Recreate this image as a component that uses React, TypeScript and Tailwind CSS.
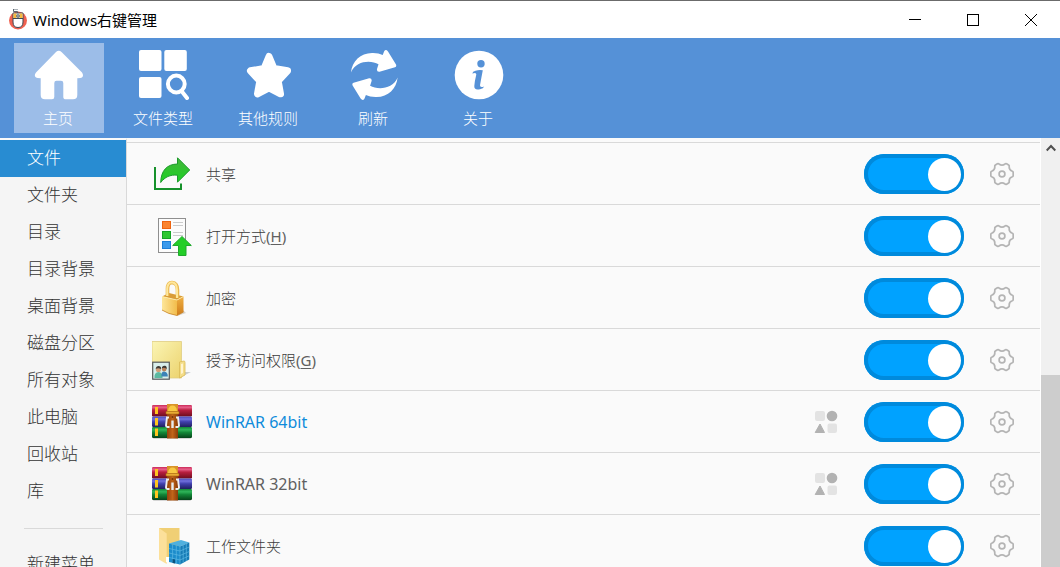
import React, { useState } from 'react';

const HomeIcon = () => (
  <svg viewBox="0 0 50 50" className="size-[50px]" fill="currentColor">
    <path d="M22 2 Q24.700 -.4 27.500 2 L48 22.500 Q50 25.500 48 27.500 Q47 28.200 43.300 28.200 V45 Q43.300 49.300 39 49.300 H32 Q29.300 49.300 29.300 47 V33 Q29.300 30.700 27 30.700 H22.500 Q20.300 30.700 20.300 33 V47 Q20.300 49.300 18 49.300 H11 Q6.700 49.300 6.700 45 V28.200 Q3 28.200 2 27.500 Q-.4 25.500 2 22.500 Z" />
  </svg>
);

const FileTypeIcon = () => (
  <svg viewBox="0 0 50 50" className="size-[50px]" fill="currentColor">
    <rect x="0" y="0" width="22.500" height="21" rx="2" />
    <rect x="25.300" y="0" width="22.500" height="21" rx="2" />
    <rect x="0" y="27" width="22.500" height="21" rx="2" />
    <circle cx="37.300" cy="34" r="8.400" fill="none" stroke="currentColor" strokeWidth="4" />
    <path d="M42.500 41 L48 48" stroke="currentColor" strokeWidth="4" strokeLinecap="round" />
  </svg>
);

const StarIcon = () => (
  <svg viewBox="0 0 50 50" className="size-[50px]" fill="currentColor" stroke="currentColor" strokeWidth="7" strokeLinejoin="round">
    <path d="M25 6.500 L30 18.500 L43.500 20.800 L34.200 31 L36.500 43.800 L25 37.800 L13.500 43.800 L15.800 31 L6.500 20.800 L20 18.500 Z" />
  </svg>
);

const RefreshIcon = () => {
  const arrow =
    'M2 22.500 C3 11 12 2.500 24 3 C28 3 31 3.700 33.700 5 L35.300 1 Q37 -1 39 1.500 L47 14.500 Q47.800 16.600 46 17.200 L30.500 21.700 Q27.500 22 28 19 L29.500 14.300 C22 10 7 10.500 2 22.500 Z';
  return (
    <svg viewBox="0 0 50 50" className="size-[50px]" fill="currentColor">
      <path d={arrow} />
      <path d={arrow} transform="rotate(180 25.3 25)" />
    </svg>
  );
};

const InfoIcon = () => (
  <svg viewBox="0 0 50 50" className="size-[50px]">
    <circle cx="25" cy="25" r="24.300" fill="currentColor" />
    <circle cx="27" cy="13.700" r="3.700" fill="#5591d7" />
    <path
      d="M18.300 23.500 Q18.500 21.300 21.500 20.700 Q25.500 19.300 28.800 20.300 Q27.500 27 26 35.300 Q25.800 38 30.200 36.500 Q29.500 38.500 26 39.200 Q20 40.500 20.300 36 Q20.700 31 22.300 24.500 Q22.500 22 18.300 23.500 Z"
      fill="#5591d7"
    />
  </svg>
);

const AppIcon = () => (
  <svg viewBox="0 0 20 22" className="h-[22px] w-5">
    <circle cx="10" cy="11.500" r="9" fill="#f0614f" />
    <path d="M9.500 4 V2.500 H5.500 V0 H10" fill="none" stroke="#5b6670" strokeWidth="1" />
    <path d="M5 4 H15 V13 Q15 18.500 10 18.500 Q5 18.500 5 13 Z" fill="#fff" stroke="#3d4954" strokeWidth="1" />
    <path d="M5.500 4.500 H8.500 V9 H5.500 Z M11.500 4.500 H14.500 V9 H11.500 Z" fill="#f7b93e" />
    <path d="M5 9.500 H15" stroke="#3d4954" strokeWidth="1" />
    <circle cx="10" cy="7" r="1.600" fill="#8d99a3" stroke="#3d4954" strokeWidth=".5" />
  </svg>
);

const ShareIcon = () => (
  <svg viewBox="0 0 40 40" className="size-10">
    <defs>
      <linearGradient id="share" x1="0" y1="0" x2="0" y2="1">
        <stop offset="0" stopColor="#45b43c" />
        <stop offset="1" stopColor="#1bd322" />
      </linearGradient>
    </defs>
    <path d="M3 13 V35 H29 V29.500" fill="none" stroke="#16912b" strokeWidth="2" />
    <path
      d="M25.500 3.800 L37.700 16 L25.500 28.200 V21.200 C18 20.500 13 23 8.700 28.500 C9 16.500 15 10.200 25.500 10 Z"
      fill="url(#share)"
      stroke="#1c9a2b"
      strokeWidth="1"
    />
  </svg>
);

const OpenWithIcon = () => (
  <svg viewBox="0 0 40 40" className="size-10">
    <rect x="6.500" y="2.500" width="27" height="34" fill="#fcfcfc" stroke="#8f8f8f" />
    <rect x="10.500" y="5.500" width="8" height="7" fill="#fb842f" stroke="#ed6410" />
    <rect x="10.500" y="15.500" width="8" height="7" fill="#2fc832" stroke="#16a426" />
    <rect x="10.500" y="25.500" width="8" height="7" fill="#3b9aec" stroke="#1d7fd7" />
    <path d="M21 6.500 H31 M21 9.500 H31 M21 16.500 H31 M21 19.500 H31" stroke="#ccc" />
    <path d="M30 20.500 L39.300 29.500 H34 V39.500 H26.500 V29.500 H20.700 Z" fill="#23ce27" stroke="#1fa82c" />
  </svg>
);

const LockIcon = () => (
  <svg viewBox="0 0 40 40" className="size-10">
    <defs>
      <linearGradient id="lockLeft" x1="0" y1="0" x2="1" y2="0">
        <stop offset="0" stopColor="#fde69a" />
        <stop offset="1" stopColor="#f2bc4b" />
      </linearGradient>
      <linearGradient id="lockRight" x1="0" y1="0" x2="0" y2="1">
        <stop offset="0" stopColor="#efb042" />
        <stop offset="1" stopColor="#cf7c1a" />
      </linearGradient>
    </defs>
    <path d="M25 38 L34 35 L31 32 Z" fill="#d9d4cb" />
    <path d="M10 18.500 L17 15 L31.500 18.500 L25 22 Z" fill="#d99c37" />
    <path d="M15.500 18 V11 Q15.500 4.500 20 4.500 Q25.500 5 25.500 12 V20" fill="none" stroke="#e8b64d" strokeWidth="3.600" />
    <path d="M15.200 18 V11 Q15.500 4.300 20 4.300 Q25 5 25 12 V20" fill="none" stroke="#ffe79b" strokeWidth="2" />
    <path d="M10 18.500 L25 22 V37.500 Q16 36 10 32 Z" fill="url(#lockLeft)" />
    <path d="M25 22 L31.500 18.500 V34 L25 37.500 Z" fill="url(#lockRight)" />
    <path d="M10 18.500 L25 22 L31.500 18.500" fill="none" stroke="#fff0b4" strokeWidth=".8" />
    <path d="M10 32 Q16 36 25 37.500 L31.500 34" fill="none" stroke="#c68125" strokeWidth=".8" />
  </svg>
);

const AccessIcon = () => (
  <svg viewBox="0 0 40 40" className="size-10">
    <defs>
      <linearGradient id="folder" x1="0" y1="0" x2="1" y2="1">
        <stop offset="0" stopColor="#fbf5b5" />
        <stop offset="1" stopColor="#ecd36e" />
      </linearGradient>
    </defs>
    <path d="M29 37 L39 32 L33 32 Z" fill="#c9ced0" />
    <path d="M0 1.500 H29.500 V38 H0 Z" fill="url(#folder)" stroke="#e0cd82" strokeWidth=".8" />
    <path d="M27.500 22 L32 21 Q33 21 33 22.500 V35 L27.500 38 Z" fill="#f4dd8a" stroke="#dbbb55" strokeWidth=".8" />
    <path d="M29 24 L31 23.500 V33 L29 34 Z" fill="#fff4cf" />
    <rect x=".7" y="22.200" width="16.600" height="17" fill="#d9efeb" stroke="#55595a" strokeWidth="1.200" />
    <path d="M2.500 38 Q2 32.500 6.500 32 Q11 32.500 10.500 38 Z" fill="#5cb9a0" />
    <path d="M9.500 36.500 Q9 31.500 12 31.500 Q16 32 15.800 36.500 Z" fill="#3c83b8" />
    <circle cx="6.400" cy="29.500" r="2.600" fill="#d2a07a" />
    <circle cx="12.200" cy="29" r="2.400" fill="#b98259" />
    <path d="M3.700 29 Q4 25.800 7 26 Q9.500 26.500 9 29 Q6 27.500 3.700 29 Z M9.800 28.500 Q10 25.300 13 25.700 Q15 26 14.700 29 Q12 27 9.800 28.500 Z" fill="#3f3a34" />
  </svg>
);

const WinRarIcon = () => (
  <svg viewBox="0 0 40 40" className="size-10">
    <defs>
      <linearGradient id="bookRed" x1="0" y1="0" x2="0" y2="1">
        <stop offset="0" stopColor="#c92a58" />
        <stop offset=".2" stopColor="#e8608a" />
        <stop offset=".45" stopColor="#b81f3f" />
        <stop offset="1" stopColor="#6d0d1d" />
      </linearGradient>
      <linearGradient id="bookBlue" x1="0" y1="0" x2="0" y2="1">
        <stop offset="0" stopColor="#4b49b8" />
        <stop offset=".25" stopColor="#7070dc" />
        <stop offset=".5" stopColor="#4040ad" />
        <stop offset="1" stopColor="#20205e" />
      </linearGradient>
      <linearGradient id="bookGreen" x1="0" y1="0" x2="0" y2="1">
        <stop offset="0" stopColor="#118535" />
        <stop offset=".25" stopColor="#2fb459" />
        <stop offset=".5" stopColor="#128637" />
        <stop offset="1" stopColor="#06421a" />
      </linearGradient>
      <linearGradient id="belt" x1="0" y1="0" x2="1" y2="0">
        <stop offset="0" stopColor="#94420b" />
        <stop offset=".5" stopColor="#c0641a" />
        <stop offset="1" stopColor="#8a3c07" />
      </linearGradient>
    </defs>
    <rect x="1" y="34" width="38" height="3" rx="1" fill="#d5d5d5" />
    <rect x="0" y="3" width="40" height="11.500" rx="1.200" fill="url(#bookRed)" />
    <rect x="0" y="14.500" width="40" height="10.500" rx="1.200" fill="url(#bookBlue)" />
    <rect x="0" y="25" width="40" height="11" rx="1.200" fill="url(#bookGreen)" />
    <path d="M3 5 H6 V12 H3 Z M3 16 H6 V23.500 H3 Z M3 26.500 H6 V34 H3 Z" fill="#ffc51f" />
    <path d="M15 2 H26 V36.500 H15 Z" fill="url(#belt)" />
    <path d="M15 2 H26 V12 H15 Z" fill="#d9942a" />
    <path d="M16 9 Q16.500 3.500 20.500 3.500 Q24.500 3.500 25 9 Z" fill="#f9c943" />
    <path d="M14 9.500 H27 V12 H14 Z" fill="#e9ab35" stroke="#a8690f" strokeWidth=".6" />
    <path d="M17 15.500 H15 L14 23.500 Q14 25 15.500 25 H17.500 M23.500 25 H25.500 Q27 25 27 23.500 L26 15.500 H24" fill="none" stroke="#f0f0f0" strokeWidth="1.900" />
    <path d="M20.500 18.500 V26" stroke="#e6ecf0" strokeWidth="2.400" />
    <circle cx="20.500" cy="15" r=".9" fill="#71350a" />
  </svg>
);

const WorkFolderIcon = () => (
  <svg viewBox="0 0 40 40" className="size-10">
    <path d="M7 2 H27.500 V34 H14 Z" fill="#f0cf75" />
    <path d="M7 2 L14.700 7.500 V38 L7 33.500 Z" fill="#fce09a" />
    <path d="M14 31 H17 V36 H14 Z" fill="#fff" />
    <path d="M17 17.500 L29 14 L37.300 16.500 L28 20.500 Z" fill="#4fb0de" />
    <path d="M17 17.500 L28 20.500 V38.500 L17 36 Z" fill="#1b8ccb" />
    <path d="M28 20.500 L37.300 16.500 V33.500 L28 38.500 Z" fill="#167cb6" />
    <path
      d="M17 22.500 L28 25 L37.300 21 M17 27 L28 29.500 L37.300 25.500 M17 31.500 L28 34 L37.300 29.700 M20.600 18.500 V37 M24.300 19.500 V37.700 M28 20.500 V38.500 M31.200 19 V36.800 M34.300 17.800 V35"
      fill="none"
      stroke="#5cb8e3"
      strokeWidth=".7"
    />
    <path d="M20.500 33 L23 33.500 V37.600 L20.500 37 Z" fill="#0b527d" />
  </svg>
);

const GearIcon = () => (
  <svg viewBox="0 0 24 24" className="size-6" fill="none" stroke="#b4b4b4" strokeWidth="1.700" strokeLinejoin="round">
    <path d="M7.400 1.800 Q8.300 1.300 9 2 Q12 4.400 15 2 Q15.700 1.300 16.600 1.800 L18.600 3 Q19.400 3.500 19.200 4.500 Q18.900 8.200 22.300 9.200 Q23.200 9.500 23.200 10.500 V13.500 Q23.200 14.500 22.300 14.800 Q18.900 15.800 19.200 19.500 Q19.400 20.500 18.600 21 L16.600 22.200 Q15.700 22.700 15 22 Q12 19.600 9 22 Q8.300 22.700 7.400 22.200 L5.400 21 Q4.600 20.500 4.800 19.500 Q5.100 15.800 1.700 14.800 Q.8 14.500 .8 13.500 V10.500 Q.8 9.500 1.700 9.200 Q5.100 8.200 4.800 4.500 Q4.600 3.500 5.400 3 Z" />
    <circle cx="12" cy="12" r="2.900" />
  </svg>
);

const GroupIcon = () => (
  <svg viewBox="0 0 24 24" className="size-6">
    <rect x="1" y="1" width="10" height="10" rx="2" fill="#e3e3e3" />
    <circle cx="18" cy="6" r="5.300" fill="#b2b2b2" />
    <path d="M6 14 L10.500 22.500 H1.200 Z" fill="#b2b2b2" stroke="#b2b2b2" strokeWidth="1" strokeLinejoin="round" />
    <rect x="13.500" y="13.500" width="9.500" height="9.500" rx="2" fill="#e3e3e3" />
  </svg>
);

const tabs = [
  { label: '主页', icon: <HomeIcon /> },
  { label: '文件类型', icon: <FileTypeIcon /> },
  { label: '其他规则', icon: <StarIcon /> },
  { label: '刷新', icon: <RefreshIcon /> },
  { label: '关于', icon: <InfoIcon /> },
];

const scenes = ['文件', '文件夹', '目录', '目录背景', '桌面背景', '磁盘分区', '所有对象', '此电脑', '回收站', '库'];

interface MenuItem {
  name: string;
  accessKey?: string;
  icon: React.ReactNode;
  grouped?: boolean;
}

const items: MenuItem[] = [
  { name: '共享', icon: <ShareIcon /> },
  { name: '打开方式', accessKey: 'H', icon: <OpenWithIcon /> },
  { name: '加密', icon: <LockIcon /> },
  { name: '授予访问权限', accessKey: 'G', icon: <AccessIcon /> },
  { name: 'WinRAR 64bit', icon: <WinRarIcon />, grouped: true },
  { name: 'WinRAR 32bit', icon: <WinRarIcon />, grouped: true },
  { name: '工作文件夹', icon: <WorkFolderIcon /> },
];

const TitleBar = () => (
  <header className="flex h-[38px] shrink-0 items-center border-t border-[#6b6b6b] bg-white pl-2">
    <AppIcon />
    <h1 className="ml-[5px] flex-1 text-[15px] leading-5 font-normal text-black">Windows右键管理</h1>
    <button aria-label="最小化" className="flex h-full w-[58px] items-center justify-center">
      <svg viewBox="0 0 12 12" className="size-3" stroke="#000"><path d="M0 5.500 H12" /></svg>
    </button>
    <button aria-label="最大化" className="flex h-full w-[58px] items-center justify-center">
      <svg viewBox="0 0 12 12" className="size-3" stroke="#000" fill="none"><rect x=".5" y=".5" width="11" height="11" /></svg>
    </button>
    <button aria-label="关闭" className="flex h-full w-[58px] items-center justify-center">
      <svg viewBox="0 0 12 12" className="size-3" stroke="#000"><path d="M0 0 L12 12 M12 0 L0 12" /></svg>
    </button>
  </header>
);

const Toolbar = () => {
  const [active, setActive] = useState('主页');
  return (
    <nav className="flex shrink-0 gap-[15px] bg-[#5591d7] px-[14px] py-[5px] text-white">
      {tabs.map((tab) => (
        <button
          key={tab.label}
          onClick={() => setActive(tab.label)}
          className={`flex h-[90px] w-[90px] flex-col items-center pt-[7px] ${active === tab.label ? 'bg-[#9cbde8]' : ''}`}
        >
          {tab.icon}
          <span className="mt-2 pr-[2px] text-[15px] leading-5">{tab.label}</span>
        </button>
      ))}
    </nav>
  );
};

const Sidebar = () => {
  const [active, setActive] = useState('文件');
  return (
    <aside className="w-[127px] shrink-0 overflow-hidden border-r border-[#d9d9d9] border-t-2 border-t-[#fafafa] bg-[#f5f5f5] text-[17px] leading-[35px]">
      {scenes.map((scene) => (
        <button
          key={scene}
          onClick={() => setActive(scene)}
          className={`block h-[37px] w-full pb-[2px] pl-[27px] text-left ${active === scene ? 'bg-[#288cd2] text-white' : 'text-[#333]'}`}
        >
          {scene}
        </button>
      ))}
      <hr className="mt-[18px] mr-[23px] mb-[17px] ml-6 border-[#d9d9d9]" />
      <button className="block h-[37px] w-full pb-[2px] pl-[27px] text-left text-[#333]">新建菜单</button>
    </aside>
  );
};

const MenuRow = ({ item }: { item: MenuItem }) => (
  <li className="flex items-center border-b border-[#d9d9d9] pt-[11px] pr-[26px] pb-[10px] pl-[25px]">
    {item.icon}
    <label
      htmlFor={item.name}
      className={`ml-[14px] flex-1 leading-5 ${item.grouped ? 'text-base leading-5 font-normal' : 'text-[15px]'} ${item.name === 'WinRAR 64bit' ? 'text-[#0e8bdb]' : item.grouped ? 'text-[#606060]' : 'text-[#3c3c3c]'}`}
    >
      {item.name}
      {item.accessKey && (
        <span className="font-normal text-[#606060]">
          (<u className="underline-offset-2">{item.accessKey}</u>)
        </span>
      )}
    </label>
    {item.grouped && (
      <button aria-label="分组" className="mr-[26px]">
        <GroupIcon />
      </button>
    )}
    <input
      id={item.name}
      type="checkbox"
      role="switch"
      defaultChecked
      className="flex h-10 w-[100px] appearance-none justify-start rounded-full bg-[#b0b0b0] px-[3px] pt-1 shadow-[inset_0_0_0_4px_#999] before:block before:size-[33px] before:rounded-full before:bg-white before:content-[''] checked:justify-end checked:bg-[#00a2ff] checked:shadow-[inset_0_0_0_4px_#008adc]"
    />
    <button aria-label="设置" className="ml-[26px]">
      <GearIcon />
    </button>
  </li>
);

const ScrollBar = () => (
  <div className="flex w-5 shrink-0 flex-col border-l border-white bg-[#f0f0f0]">
    <button aria-label="向上滚动" className="flex h-5 items-center justify-center">
      <svg viewBox="0 0 10 8" className="h-2 w-[10px]" fill="none" stroke="#505050" strokeWidth="2">
        <path d="M.7 6.500 L5 2 L9.300 6.500" />
      </svg>
    </button>
    <div className="mt-[217px] flex-1 bg-[#cdcdcd]" />
  </div>
);

const App = () => {
  return (
    <div className="flex h-screen flex-col overflow-hidden bg-[#fafafa] font-['Noto_Sans','Noto_Sans_CJK_SC',sans-serif] font-light">
      <TitleBar />
      <Toolbar />
      <div className="flex min-h-0 flex-1">
        <Sidebar />
        <main className="min-w-0 flex-1 overflow-hidden pt-1">
          <ul className="border-t border-[#d9d9d9]">
            {items.map((item) => (
              <MenuRow key={item.name} item={item} />
            ))}
          </ul>
        </main>
        <ScrollBar />
      </div>
    </div>
  );
};

export default App;
